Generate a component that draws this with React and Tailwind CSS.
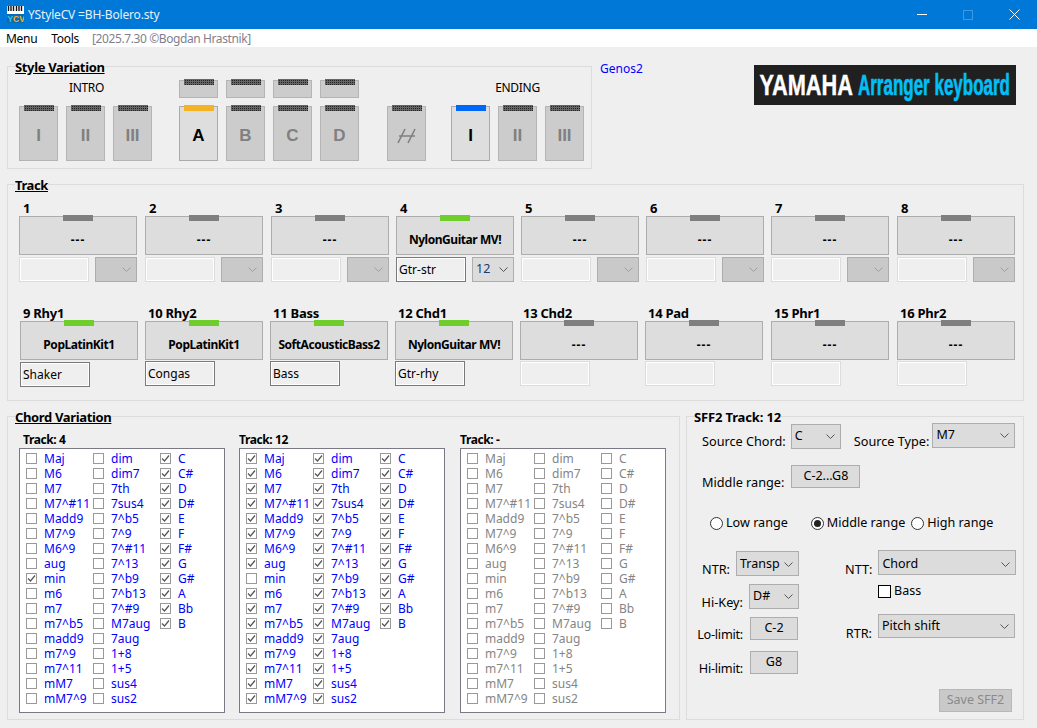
import React from "react";

const DOT = "bg-[#666666] bg-[linear-gradient(#666666_1px,transparent_1px),linear-gradient(90deg,#666666_1px,#222222_1px)] bg-[length:2px_2px]";

function Led({ kind = "dots" }) {
  const tone =
    kind === "dots" ? DOT : kind === "amber" ? "bg-[#f4b324]" : kind === "blue" ? "bg-[#0068f8]" : kind === "green" ? "bg-[#6fce2c]" : "bg-[#7f7f7f]";
  return <span className={`absolute left-1/2 -translate-x-1/2 w-[30px] h-[6px] -top-[2px] ${tone}`} />;
}

function StyleBtn({ label, active, led = "dots", icon }) {
  return (
    <div
      className={`relative w-[39px] h-[55px] border flex items-center justify-center pt-[4px] text-[17px] font-bold [font-family:'Liberation_Sans',sans-serif] ${
        active ? "bg-[#dedede] border-[#ababab] text-black" : "bg-[#cccccc] border-[#b4b4b4] text-[#808080]"
      }`}
    >
      <Led kind={led} />
      {icon ? (
        <svg width="19" height="16" viewBox="0 0 19 16" fill="none" stroke="#808080" strokeWidth="1.6">
          <path d="M8 1 1 15M18 1l-7 14M2 8h16" />
        </svg>
      ) : (
        label
      )}
    </div>
  );
}

function SmallBtn() {
  return (
    <div className="relative w-[39px] h-[18px] bg-[#cccccc] border border-[#b4b4b4]">
      <Led />
    </div>
  );
}

function Group({ title, underline = true, className, titleClass = "tracking-[-0.35px]", children }) {
  return (
    <section className={`relative border border-[#dcdcdc] ${className}`}>
      <h2 className={`absolute -top-[7px] left-[7px] bg-[#efefef] text-[13px] leading-[14px] font-bold text-black ${titleClass} ${underline ? "underline" : ""}`}>
        {title}
      </h2>
      {children}
    </section>
  );
}

function Chevron({ color = "#555" }) {
  return (
    <svg width="9" height="5" viewBox="0 0 9 5" fill="none" stroke={color} strokeWidth="1" className="shrink-0">
      <path d="M.5.5l4 4 4-4" />
    </svg>
  );
}

function Select({ value, className, disabled, textClass = "text-black" }) {
  return (
    <div
      className={`flex items-center justify-between pl-[3px] pr-[5px] border border-[#adadad] text-[12.5px] ${
        disabled ? "bg-[#c9c9c9]" : "bg-[#dcdcdc]"
      } ${className}`}
    >
      <span className={`whitespace-nowrap ${textClass}`}>{value}</span>
      <Chevron color={disabled ? "#a0a0a0" : "#555"} />
    </div>
  );
}

function Input({ value, className = "" }) {
  return (
    <div
      className={`w-[70px] h-[25px] flex items-center pl-[2px] pt-px text-[12px] text-black bg-[#efefef] border shadow-[inset_0_0_0_1px_#fff] ${
        value ? "border-[#7a7a7a]" : "border-[#dcdcdc]"
      } ${className}`}
    >
      {value}
    </div>
  );
}

function TrackBtn({ text, on }) {
  return (
    <div className={`relative w-[118px] h-[39px] bg-[#dddddd] border border-[#adadad] flex items-center justify-center pt-[9px] text-[12px] font-bold text-black whitespace-nowrap ${text === "---" ? "tracking-[1px]" : "tracking-[-0.45px]"}`}>
      <Led kind={on ? "green" : "gray"} />
      {text}
    </div>
  );
}

const top = [
  { n: "1", t: "---" },
  { n: "2", t: "---" },
  { n: "3", t: "---" },
  { n: "4", t: "NylonGuitar MV!", on: true, input: "Gtr-str", sel: "12" },
  { n: "5", t: "---" },
  { n: "6", t: "---" },
  { n: "7", t: "---" },
  { n: "8", t: "---" },
];
const bottom = [
  { n: "9 Rhy1", t: "PopLatinKit1", on: true, input: "Shaker", shift: true },
  { n: "10 Rhy2", t: "PopLatinKit1", on: true, input: "Congas" },
  { n: "11 Bass", t: "SoftAcousticBass2", on: true, input: "Bass" },
  { n: "12 Chd1", t: "NylonGuitar MV!", on: true, input: "Gtr-rhy" },
  { n: "13 Chd2", t: "---" },
  { n: "14 Pad", t: "---" },
  { n: "15 Phr1", t: "---" },
  { n: "16 Phr2", t: "---" },
];

const col1 = ["Maj", "M6", "M7", "M7^#11", "Madd9", "M7^9", "M6^9", "aug", "min", "m6", "m7", "m7^b5", "madd9", "m7^9", "m7^11", "mM7", "mM7^9"];
const col2 = ["dim", "dim7", "7th", "7sus4", "7^b5", "7^9", "7^#11", "7^13", "7^b9", "7^b13", "7^#9", "M7aug", "7aug", "1+8", "1+5", "sus4", "sus2"];
const col3 = ["C", "C#", "D", "D#", "E", "F", "F#", "G", "G#", "A", "Bb", "B"];

function Check({ checked, black }) {
  return (
    <span className={`shrink-0 bg-white border flex items-center justify-center ${black ? "w-[13px] h-[13px] border-black" : "w-[11px] h-[11px] border-[#999999]"}`}>
      {checked && (
        <svg width="9" height="9" viewBox="0 0 9 9" fill="none" stroke="#555" strokeWidth="1.2">
          <path d="M1 4.500l2.500 2.500L8 1.500" />
        </svg>
      )}
    </span>
  );
}

function ChordCol({ items, isChecked, text, width }) {
  return (
    <div className={`flex flex-col ${width}`}>
      {items.map((it) => (
        <div key={it} className={`h-[15px] flex items-center gap-[7px] text-[12px] leading-[15px] whitespace-nowrap ${text}`}>
          <Check checked={isChecked(it)} />
          <span>{it}</span>
        </div>
      ))}
    </div>
  );
}

function ChordList({ title, c1, c2, c3, gray, className = "", titleClass = "" }) {
  const text = gray ? "text-[#858585]" : "text-[#0000ff]";
  return (
    <div className={`w-[206px] ${className}`}>
      <div className={`h-[16px] text-[12px] leading-[16px] font-bold text-black tracking-[-0.4px] ${titleClass}`}>{title}</div>
      <div className="h-[265px] bg-white border border-[#7a7a86] pt-[2px] pl-[6px] flex">
        <ChordCol items={col1} isChecked={c1} text={text} width="w-[67px]" />
        <ChordCol items={col2} isChecked={c2} text={text} width="w-[67px]" />
        <ChordCol items={col3} isChecked={c3} text={text} width="w-[50px]" />
      </div>
    </div>
  );
}

function Radio({ checked, label, className = "" }) {
  return (
    <div className={`flex items-center gap-[3px] text-[12.6px] text-black whitespace-nowrap ${className}`}>
      <span className="w-[13px] h-[13px] rounded-full bg-white border border-[#333] flex items-center justify-center">
        {checked && <span className="w-[7px] h-[7px] rounded-full bg-[#222]" />}
      </span>
      {label}
    </div>
  );
}

function FlatBtn({ children, className = "" }) {
  return <div className={`flex items-center justify-center bg-[#dcdcdc] border border-[#adadad] text-[12.5px] text-black ${className}`}>{children}</div>;
}

function Lbl({ children, className = "" }) {
  return <span className={`text-[12.7px] leading-[16px] text-black whitespace-nowrap ${className}`}>{children}</span>;
}

export default function App() {
  return (
    <div className="w-[1037px] h-[728px] overflow-hidden flex flex-col bg-[#efefef] [font-family:'Noto_Sans',sans-serif]">
      {/* title bar */}
      <header className="h-[29px] shrink-0 bg-[#0078d7] flex items-center text-white text-[12px]">
        <svg width="17" height="17" viewBox="0 0 17 17" className="ml-[7px] mr-[4px] shrink-0">
          <rect width="17" height="17" fill="#0b6cb0" />
          <rect width="17" height="8" fill="#fff" />
          <path d="M1.500 0v5M4 0v5M6.500 0v5M9.500 0v5M12 0v5M14.500 0v5" stroke="#111" strokeWidth="1.4" />
          <text x="0.5" y="16" fontSize="8.500" fontWeight="700" fill="#39c4f0" fontFamily="Liberation Sans">Y</text>
          <text x="6" y="16" fontSize="8.500" fontWeight="700" fill="#f4b324" fontFamily="Liberation Sans">CV</text>
        </svg>
        <span className="text-[#e4f1fb] tracking-[-0.17px]">YStyleCV =BH-Bolero.sty</span>
        <div className="ml-auto flex">
          <div className="w-[46px] h-[29px] flex items-center justify-center">
            <span className="w-[10px] h-px bg-white" />
          </div>
          <div className="w-[46px] h-[29px] flex items-center justify-center">
            <span className="w-[10px] h-[10px] border border-[#3f9ae2]" />
          </div>
          <div className="w-[46px] h-[29px] flex items-center justify-center">
            <svg width="11" height="11" viewBox="0 0 11 11" stroke="#fff" strokeWidth="1">
              <path d="M.5.5l10 10M10.500.5l-10 10" />
            </svg>
          </div>
        </div>
      </header>

      {/* menu */}
      <nav className="h-[18px] shrink-0 bg-white flex items-center pl-[6px] pt-[2px] text-[12px] text-black tracking-[-0.3px]">
        <span>Menu</span>
        <span className="ml-[14px]">Tools</span>
        <span className="ml-[13px] text-[#7f7f8f] tracking-[-0.4px]">[2025.7.30 ©Bogdan Hrastnik]</span>
      </nav>

      <main className="flex-1 flex flex-col pl-[7px] pr-[13px] pt-[19px]">
        {/* top row */}
        <div className="flex items-start">
          <Group title="Style Variation" className="w-[585px] h-[103px] pt-[13px] pl-[11px] flex">
            <div className="w-[133px] flex flex-col gap-[8px]">
              <div className="h-[18px] flex items-center justify-center pl-[2px] pb-[2px] text-[12px] text-black tracking-[-0.3px]">INTRO</div>
              <div className="flex gap-[8px]">
                <StyleBtn label="I" />
                <StyleBtn label="II" />
                <StyleBtn label="III" />
              </div>
            </div>
            <div className="ml-[27px] flex flex-col gap-[8px]">
              <div className="flex gap-[8px]">
                <SmallBtn />
                <SmallBtn />
                <SmallBtn />
                <SmallBtn />
              </div>
              <div className="flex gap-[8px]">
                <StyleBtn label="A" active led="amber" />
                <StyleBtn label="B" />
                <StyleBtn label="C" />
                <StyleBtn label="D" />
              </div>
            </div>
            <div className="ml-[28px] mt-[26px]">
              <StyleBtn icon />
            </div>
            <div className="ml-[25px] w-[133px] flex flex-col gap-[8px]">
              <div className="h-[18px] flex items-center justify-center pb-[2px] text-[12px] text-black tracking-[-0.3px]">ENDING</div>
              <div className="flex gap-[8px]">
                <StyleBtn label="I" active led="blue" />
                <StyleBtn label="II" />
                <StyleBtn label="III" />
              </div>
            </div>
          </Group>
          <span className="ml-[8px] -mt-[5px] text-[12px] leading-[16px] text-[#0000ff]">Genos2</span>
          <div className="ml-auto mr-[8px] -mt-[1px] w-[262px] h-[40px] bg-[#202020]">
            <svg width="262" height="40" viewBox="0 0 262 40">
              <text transform="translate(5.500 30) scale(0.75 1)" fontFamily="Liberation Sans" fontWeight="700" fontSize="29" fill="#fff" stroke="#fff" strokeWidth="0.4">YAMAHA</text>
              <text transform="translate(104 30) scale(0.586 1)" fontFamily="Liberation Sans" fontWeight="700" fontSize="29" fill="#00c0f8" stroke="#00c0f8" strokeWidth="0.6">Arranger keyboard</text>
            </svg>
          </div>
        </div>

        {/* track */}
        <Group title="Track" className="mt-[15px] w-[1017px] h-[217px] pt-[15px] pl-[11px]" titleClass="tracking-[-0.4px]">
          <div className="grid grid-cols-[126px_126px_125px_125px_125px_125px_126px_118px]">
            {top.map((c) => (
              <div key={c.n} className="w-[118px]">
                <div className="h-[16px] pl-[4px] text-[13px] leading-[16px] font-bold text-black">{c.n}</div>
                <TrackBtn text={c.t} on={c.on} />
                <div className="mt-[2px] flex justify-between">
                  <Input value={c.input} />
                  <Select value={c.sel || ""} disabled={!c.sel} className="w-[42px] h-[25px]" textClass="text-[#1c3a6e]" />
                </div>
              </div>
            ))}
          </div>
          <div className="mt-[23px] ml-[1px] grid grid-cols-[125px_125px_125px_125px_125px_126px_126px_118px]">
            {bottom.map((c) => (
              <div key={c.n} className="w-[118px]">
                <div className="h-[16px] pl-[3px] text-[13px] leading-[16px] font-bold text-black whitespace-nowrap tracking-[-0.25px]">{c.n}</div>
                <TrackBtn text={c.t} on={c.on} />
                <Input value={c.input} className={c.shift ? "mt-[2px]" : "mt-[1px]"} />
              </div>
            ))}
          </div>
        </Group>

        {/* bottom */}
        <div className="mt-[15px] flex">
          <Group title="Chord Variation" className="w-[673px] h-[304px] pt-[15px] pl-[11px] flex">
            <ChordList title="Track: 4" titleClass="pl-[4px]" c1={(x) => x === "min"} c2={() => false} c3={() => true} />
            <ChordList title="Track: 12" c1={(x) => x !== "min"} c2={() => true} c3={() => true} className="ml-[14px]" />
            <ChordList title="Track: -" c1={() => false} c2={() => false} c3={() => false} gray className="ml-[15px]" />
          </Group>

          <Group title="SFF2 Track: 12" underline={false} titleClass="tracking-[-0.15px]" className="ml-[6px] w-[338px] h-[304px] pt-[6px] flex flex-col">
            <div className="flex h-[25px]">
              <Lbl className="ml-[15px] mt-[10px]">Source Chord:</Lbl>
              <Select value="C" className="ml-[5px] mt-[1px] w-[50px] h-[25px] pb-[1px]" />
              <Lbl className="ml-[13px] mt-[10px]">Source Type:</Lbl>
              <Select value="M7" className="ml-[3px] w-[83px] h-[25px]" />
            </div>
            <div className="flex mt-[17px] h-[24px]">
              <Lbl className="ml-[15px] mt-[9px]">Middle range:</Lbl>
              <FlatBtn className="ml-[7px] w-[69px] h-[23px]">C-2...G8</FlatBtn>
            </div>
            <div className="flex mt-[26px] h-[16px] items-center">
              <Radio label="Low range" className="ml-[23px]" />
              <Radio checked label="Middle range" className="ml-[23px]" />
              <Radio label="High range" className="ml-[6px]" />
            </div>
            <div className="flex mt-[20px]">
              <div className="w-[112px] flex flex-col items-end gap-[7px]">
                <div className="flex items-start gap-[6px]">
                  <Lbl className="mt-[10px]">NTR:</Lbl>
                  <Select value="Transp" className="w-[63px] h-[25px] pt-[2px]" />
                </div>
                <div className="flex items-start gap-[6px]">
                  <Lbl className="mt-[10px]">Hi-Key:</Lbl>
                  <Select value="D#" className="w-[50px] h-[25px]" />
                </div>
                <div className="flex items-start gap-[7px] mr-px">
                  <Lbl className="mt-[9px] tracking-[-0.25px]">Lo-limit:</Lbl>
                  <FlatBtn className="w-[48px] h-[23px]">C-2</FlatBtn>
                </div>
                <div className="flex items-start gap-[7px] mr-px mt-[2px]">
                  <Lbl className="mt-[9px] tracking-[-0.25px]">Hi-limit:</Lbl>
                  <FlatBtn className="w-[48px] h-[23px]">G8</FlatBtn>
                </div>
              </div>
              <div className="ml-[46px] w-[171px] -mt-px flex flex-col">
                <div className="flex items-start gap-[6px] justify-end">
                  <Lbl className="mt-[11px]">NTT:</Lbl>
                  <Select value="Chord" className="w-[138px] h-[25px] pt-[3px]" />
                </div>
                <div className="mt-[5px] ml-[33px] flex items-center gap-[3px] text-[12.5px] text-black">
                  <Check black />
                  Bass
                </div>
                <div className="mt-[13px] flex items-start gap-[6px] justify-end pr-px">
                  <Lbl className="mt-[11px]">RTR:</Lbl>
                  <Select value="Pitch shift" className="w-[137px] h-[24px] pt-[1px]" />
                </div>
                <div className="mt-[48px] ml-[94px] w-[73px] h-[23px] flex items-center justify-center bg-[#c9c9c9] border border-[#b8b8b8] text-[12.5px] text-[#8a8a8a]">
                  Save SFF2
                </div>
              </div>
            </div>
          </Group>
        </div>
      </main>
    </div>
  );
}
